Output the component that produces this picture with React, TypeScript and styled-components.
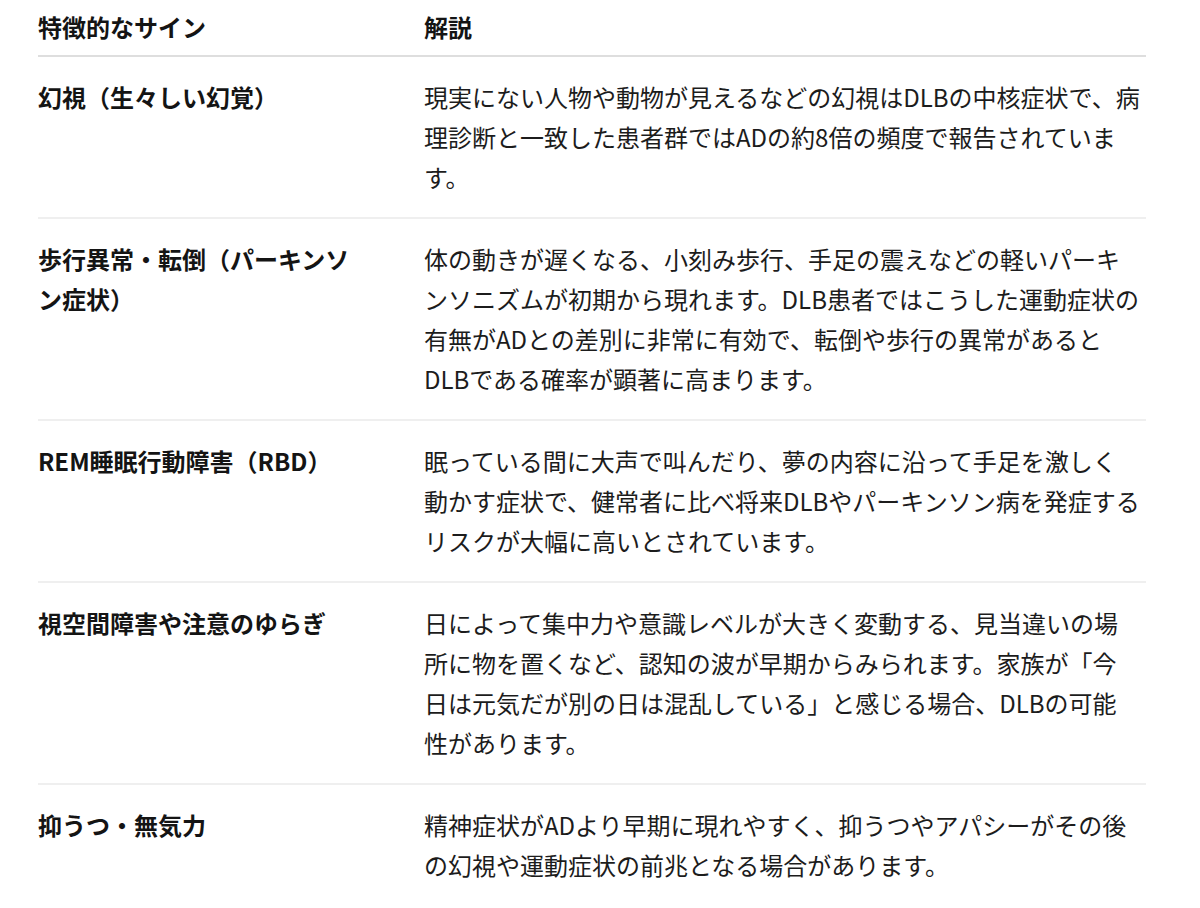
import React from "react";
import styled, { createGlobalStyle } from "styled-components";

const GlobalStyle = createGlobalStyle`
  html, body {
    margin: 0;
    padding: 0;
    background: #ffffff;
  }
  body {
    font-family: "Noto Sans CJK JP", "Noto Sans", sans-serif;
    color: #1c1c1c;
  }
`;

const Page = styled.div`
  padding: 0 54px 0 38px;
`;

const Table = styled.div`
  display: grid;
  grid-template-columns: 386px 1fr;
  width: 1108px;
`;

const HeadCell = styled.div`
  padding: 7px 0 8px 0;
  font-size: 24px;
  line-height: 40px;
  font-weight: 700;
  color: #141414;
  border-bottom: 2px solid #dedede;
`;

const SignCell = styled.div<{ $last?: boolean }>`
  padding: 20px 56px 20px 0;
  font-size: 24px;
  line-height: 40px;
  font-weight: 700;
  color: #141414;
  border-bottom: ${(p) => (p.$last ? "none" : "2px solid #efefef")};
`;

const DescCell = styled.div<{ $last?: boolean }>`
  padding: 20px 0;
  font-size: 24px;
  line-height: 40px;
  font-weight: 400;
  color: #1c1c1c;
  border-bottom: ${(p) => (p.$last ? "none" : "2px solid #efefef")};
`;

const Line = styled.span`
  display: block;
  white-space: nowrap;
`;

const rows: { sign: string; desc: string[] }[] = [
  {
    sign: "幻視（生々しい幻覚）",
    desc: [
      "現実にない人物や動物が見えるなどの幻視はDLBの中核症状で、病",
      "理診断と一致した患者群ではADの約8倍の頻度で報告されていま",
      "す。",
    ],
  },
  {
    sign: "歩行異常・転倒（パーキンソン症状）",
    desc: [
      "体の動きが遅くなる、小刻み歩行、手足の震えなどの軽いパーキ",
      "ンソニズムが初期から現れます。DLB患者ではこうした運動症状の",
      "有無がADとの差別に非常に有効で、転倒や歩行の異常があると",
      "DLBである確率が顕著に高まります。",
    ],
  },
  {
    sign: "REM睡眠行動障害（RBD）",
    desc: [
      "眠っている間に大声で叫んだり、夢の内容に沿って手足を激しく",
      "動かす症状で、健常者に比べ将来DLBやパーキンソン病を発症する",
      "リスクが大幅に高いとされています。",
    ],
  },
  {
    sign: "視空間障害や注意のゆらぎ",
    desc: [
      "日によって集中力や意識レベルが大きく変動する、見当違いの場",
      "所に物を置くなど、認知の波が早期からみられます。家族が「今",
      "日は元気だが別の日は混乱している」と感じる場合、DLBの可能",
      "性があります。",
    ],
  },
  {
    sign: "抑うつ・無気力",
    desc: [
      "精神症状がADより早期に現れやすく、抑うつやアパシーがその後",
      "の幻視や運動症状の前兆となる場合があります。",
    ],
  },
];

export default function App() {
  return (
    <Page>
      <GlobalStyle />
      <Table>
        <HeadCell>特徴的なサイン</HeadCell>
        <HeadCell>解説</HeadCell>
        {rows.map((r, i) => (
          <React.Fragment key={r.sign}>
            <SignCell $last={i === rows.length - 1}>{r.sign}</SignCell>
            <DescCell $last={i === rows.length - 1}>
              {r.desc.map((l) => (
                <Line key={l}>{l}</Line>
              ))}
            </DescCell>
          </React.Fragment>
        ))}
      </Table>
    </Page>
  );
}
